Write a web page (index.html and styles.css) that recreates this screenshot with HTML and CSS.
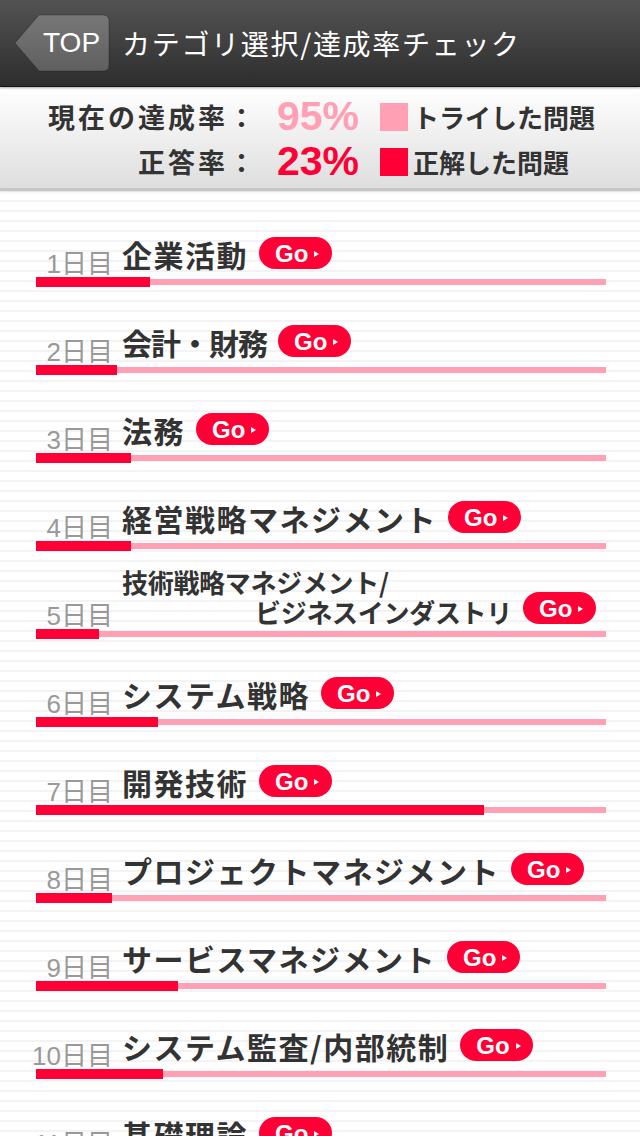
FILE: index.html
```html
<!DOCTYPE html>
<html lang="ja">
<head>
    <meta charset="utf-8">
    <title>カテゴリ選択/達成率チェック</title>
    <link rel="stylesheet" href="styles.css">
</head>
<body>

<header class="topbar">
    <a class="back" href="#">
        <svg width="96" height="58" viewBox="0 0 96 58">
            <defs>
                <linearGradient id="backFill" x1="0" y1="0" x2="0" y2="1">
                    <stop offset="0" stop-color="#777"/>
                    <stop offset="1" stop-color="#5f5f5f"/>
                </linearGradient>
            </defs>
            <path d="M25 1 H89 Q95 1 95 7 V51 Q95 57 89 57 H25 L1 29 Z" fill="url(#backFill)" stroke="rgba(0,0,0,0.25)" stroke-width="1"/>
            <text x="29" y="38" class="back-text">TOP</text>
        </svg>
    </a>
    <h1>カテゴリ選択/達成率チェック</h1>
</header>

<div class="stats">
    <div class="stat">
        <span class="stat-label">現在の達成率：</span>
        <span class="stat-value tried">95%</span>
        <span class="swatch tried-bg"></span>
        <span class="stat-text">トライした問題</span>
    </div>
    <div class="stat">
        <span class="stat-label">正答率：</span>
        <span class="stat-value correct">23%</span>
        <span class="swatch correct-bg"></span>
        <span class="stat-text">正解した問題</span>
    </div>
</div>

<ul class="days">
    <li class="day">
        <div class="head">
            <span class="label">1日目</span>
            <span class="title">企業活動</span>
            <a class="go" href="#">Go</a>
        </div>
        <div class="track"><div class="fill" style="width:114px"></div></div>
    </li>
    <li class="day">
        <div class="head">
            <span class="label">2日目</span>
            <span class="title tight">会計・財務</span>
            <a class="go" href="#">Go</a>
        </div>
        <div class="track"><div class="fill" style="width:81px"></div></div>
    </li>
    <li class="day">
        <div class="head">
            <span class="label">3日目</span>
            <span class="title">法務</span>
            <a class="go" href="#">Go</a>
        </div>
        <div class="track"><div class="fill" style="width:95px"></div></div>
    </li>
    <li class="day">
        <div class="head">
            <span class="label">4日目</span>
            <span class="title">経営戦略マネジメント</span>
            <a class="go" href="#">Go</a>
        </div>
        <div class="track"><div class="fill" style="width:95px"></div></div>
    </li>
    <li class="day">
        <div class="head">
            <span class="label">5日目</span>
            <span class="title two">技術戦略マネジメント/<span class="second">ビジネスインダストリ</span></span>
            <a class="go two" href="#">Go</a>
        </div>
        <div class="track"><div class="fill" style="width:63px"></div></div>
    </li>
    <li class="day">
        <div class="head">
            <span class="label">6日目</span>
            <span class="title">システム戦略</span>
            <a class="go" href="#">Go</a>
        </div>
        <div class="track"><div class="fill" style="width:122px"></div></div>
    </li>
    <li class="day">
        <div class="head">
            <span class="label">7日目</span>
            <span class="title">開発技術</span>
            <a class="go" href="#">Go</a>
        </div>
        <div class="track"><div class="fill" style="width:448px"></div></div>
    </li>
    <li class="day">
        <div class="head">
            <span class="label">8日目</span>
            <span class="title">プロジェクトマネジメント</span>
            <a class="go" href="#">Go</a>
        </div>
        <div class="track"><div class="fill" style="width:76px"></div></div>
    </li>
    <li class="day">
        <div class="head">
            <span class="label">9日目</span>
            <span class="title">サービスマネジメント</span>
            <a class="go" href="#">Go</a>
        </div>
        <div class="track"><div class="fill" style="width:142px"></div></div>
    </li>
    <li class="day">
        <div class="head">
            <span class="label">10日目</span>
            <span class="title">システム監査/内部統制</span>
            <a class="go" href="#">Go</a>
        </div>
        <div class="track"><div class="fill" style="width:127px"></div></div>
    </li>
    <li class="day">
        <div class="head">
            <span class="label">11日目</span>
            <span class="title">基礎理論</span>
            <a class="go" href="#">Go</a>
        </div>
        <div class="track"><div class="fill" style="width:90px"></div></div>
    </li>
</ul>

</body>
</html>
```

FILE: styles.css
```css
body {
    margin: 0;
    width: 640px;
    height: 1136px;
    overflow: hidden;
    font-family: "Noto Sans CJK JP", sans-serif;
    color: #333;
    background: repeating-linear-gradient(#f3f3f3 0 2px, #fff 2px 10px);
}

/* top bar */
.topbar {
    position: relative;
    z-index: 1;
    height: 86px;
    display: flex;
    align-items: center;
    gap: 12px;
    padding-left: 14px;
    background: linear-gradient(#535353, #2d2d2d);
    border-bottom: 1px solid #151515;
    box-shadow: 0 1px 2px rgba(0, 0, 0, 0.35);
}
.back { display: block; width: 96px; height: 58px; }
.back svg { display: block; }
.back-text { font-family: "Liberation Sans", sans-serif; font-size: 28px; fill: #fff; }
.topbar h1 {
    margin: 0;
    font-size: 28px;
    font-weight: 400;
    line-height: 1;
    letter-spacing: 1.7px;
    color: #fff;
}

/* rate panel */
.stats {
    padding: 7px 0 4px;
    background: linear-gradient(#fff, #dedede);
    border-bottom: 3px solid #c6c6c6;
    box-shadow: 0 2px 2px rgba(0, 0, 0, 0.05);
}
.stat { display: flex; align-items: center; height: 45px; }
.stat-label {
    width: 258px;
    text-align: right;
    font-size: 27px;
    font-weight: 700;
    letter-spacing: 3px;
    line-height: 1;
}
.stat-value {
    width: 84px;
    margin-left: 19px;
    font: bold 41px/1 "Liberation Sans", sans-serif;
}
.swatch { width: 28px; height: 28px; margin: 0 5px 0 19px; }
.stat-text { font-size: 26px; font-weight: 700; line-height: 1; }
.tried { color: #ffa0b4; }
.correct { color: #ff0036; }
.tried-bg { background: #ffa0b4; }
.correct-bg { background: #ff0036; }

/* day list */
.days { list-style: none; margin: 0; padding: 22px 0 0; }
.day { height: 88px; padding-left: 36px; }
.head { height: 66px; display: flex; align-items: flex-end; }
.label {
    display: flex;
    justify-content: flex-end;
    flex: none;
    width: 77px;
    margin-bottom: 3px;
    white-space: nowrap;
    font-family: "Liberation Sans", "Noto Sans CJK JP", sans-serif;
    font-size: 26px;
    line-height: 24px;
    color: #999;
}
.title {
    margin: 0 11px 10px 9px;
    font-size: 30px;
    font-weight: 700;
    line-height: 30px;
    letter-spacing: 1.5px;
    white-space: nowrap;
}
.title.tight { letter-spacing: -1px; }
.title.two {
    margin-bottom: 4px;
    font-size: 26px;
    line-height: 30px;
    letter-spacing: -0.3px;
}
.title .second { display: block; padding-left: 133px; }

.go {
    display: inline-flex;
    align-items: center;
    box-sizing: border-box;
    width: 73px;
    height: 32px;
    margin-bottom: 10px;
    padding: 2px 0 0 16px;
    border-radius: 16px;
    background: #ff0036;
    color: #fff;
    text-decoration: none;
    font: bold 24px/1 "Liberation Sans", sans-serif;
}
.go::after {
    content: "";
    margin-left: 6px;
    border-left: 5px solid #fff;
    border-top: 3.5px solid transparent;
    border-bottom: 3.5px solid transparent;
}
.go.two { margin-bottom: 7px; }

.track {
    display: flex;
    align-items: center;
    width: 570px;
    height: 6px;
    background: #ffa0b4;
}
.fill { height: 10px; background: #ff0036; }
```
